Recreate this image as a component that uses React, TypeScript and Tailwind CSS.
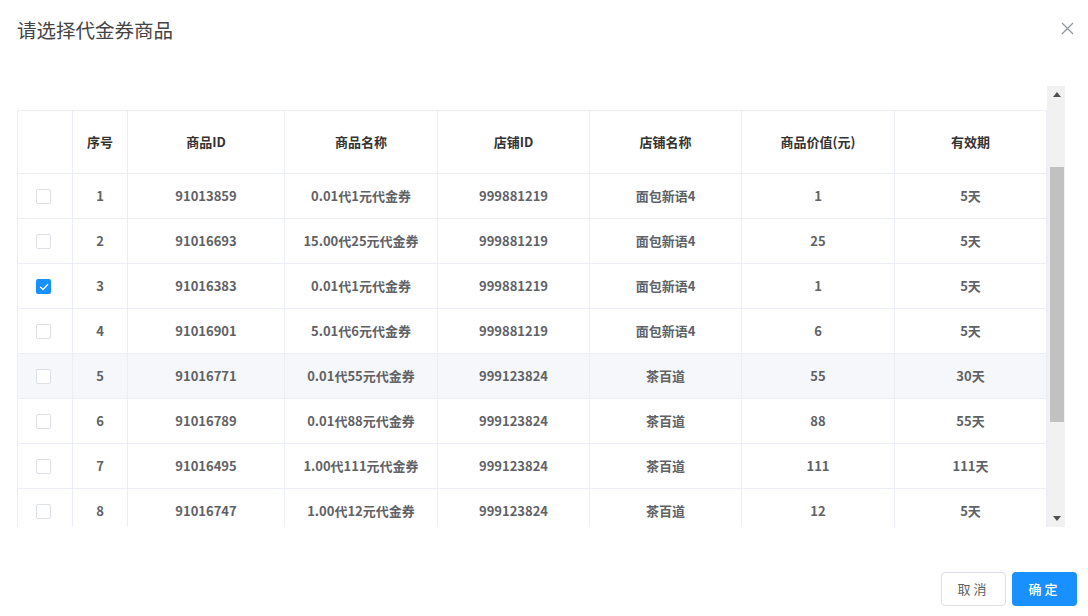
import React from "react";

const rows = [
  { n: 1, id: "91013859", name: "0.01代1元代金券", sid: "999881219", shop: "面包新语4", v: "1", d: "5天" },
  { n: 2, id: "91016693", name: "15.00代25元代金券", sid: "999881219", shop: "面包新语4", v: "25", d: "5天" },
  { n: 3, id: "91016383", name: "0.01代1元代金券", sid: "999881219", shop: "面包新语4", v: "1", d: "5天", checked: true },
  { n: 4, id: "91016901", name: "5.01代6元代金券", sid: "999881219", shop: "面包新语4", v: "6", d: "5天" },
  { n: 5, id: "91016771", name: "0.01代55元代金券", sid: "999123824", shop: "茶百道", v: "55", d: "30天", hover: true },
  { n: 6, id: "91016789", name: "0.01代88元代金券", sid: "999123824", shop: "茶百道", v: "88", d: "55天" },
  { n: 7, id: "91016495", name: "1.00代111元代金券", sid: "999123824", shop: "茶百道", v: "111", d: "111天" },
  { n: 8, id: "91016747", name: "1.00代12元代金券", sid: "999123824", shop: "茶百道", v: "12", d: "5天" },
];

const widths = [55, 55, 157, 153, 152, 152, 153, 152];
const headers = ["", "序号", "商品ID", "商品名称", "店铺ID", "店铺名称", "商品价值(元)", "有效期"];

function Checkbox({ checked }: { checked?: boolean }) {
  return checked ? (
    <span className="flex w-[15px] h-[15px] rounded-[2px] bg-[#1890ff] items-center justify-center">
      <svg width="10" height="8" viewBox="0 0 10 8" fill="none">
        <path d="M1.5 4.2 L4 6.5 L8.7 1.5" stroke="white" strokeWidth="1.2" strokeLinecap="round" strokeLinejoin="round" />
      </svg>
    </span>
  ) : (
    <span className="block w-[15px] h-[15px] rounded-[2px] border border-[#dcdfe6] bg-white" />
  );
}

export default function App() {
  return (
    <div
      className="w-[1088px] h-[616px] bg-white flex flex-col overflow-hidden"
      style={{ fontFamily: '"Noto Sans CJK SC", "Noto Sans", sans-serif' }}
    >
      <div className="flex items-start justify-between h-[86px] pl-[17px] pr-[14px] pt-[17px]">
        <div className="text-[19.5px] leading-[26px] text-[#444] font-normal">请选择代金券商品</div>
        <svg className="mt-[5px]" width="13" height="13" viewBox="0 0 13 13" fill="none">
          <path d="M1 1 L12 12 M12 1 L1 12" stroke="#909399" strokeWidth="1.1" />
        </svg>
      </div>

      <div className="flex h-[441px] pl-[17px]">
        <div className="w-[1030px] h-full overflow-hidden pt-[24px]">
          <table className="table-fixed border-collapse w-[1029px]">
            <colgroup>
              {widths.map((w, i) => (
                <col key={i} style={{ width: w }} />
              ))}
            </colgroup>
            <thead>
              <tr className="h-[63px]">
                {headers.map((h, i) => (
                  <th
                    key={i}
                    className="border border-[#ebeef5] text-[13px] font-semibold text-[#333] text-center p-0"
                  >
                    {h}
                  </th>
                ))}
              </tr>
            </thead>
            <tbody>
              {rows.map((r) => (
                <tr key={r.n} className={"h-[45px] " + (r.hover ? "bg-[#f5f7fa]" : "bg-white")}>
                  <td className="border border-[#ebeef5] p-0">
                    <div className="flex items-center justify-center pr-[3px] pt-[1px]">
                      <Checkbox checked={r.checked} />
                    </div>
                  </td>
                  {[String(r.n), r.id, r.name, r.sid, r.shop, r.v, r.d].map((c, i) => (
                    <td
                      key={i}
                      className="border border-[#ebeef5] text-center p-0 text-[13px] font-bold text-[#606266]"
                    >
                      {c}
                    </td>
                  ))}
                </tr>
              ))}
            </tbody>
          </table>
        </div>
        <div className="w-[18px] h-full bg-[#f1f1f1] flex flex-col">
          <div className="h-[17px] flex items-center justify-center pl-[2px]">
            <svg width="8" height="5" viewBox="0 0 8 5">
              <path d="M0 5 L4 0 L8 5 Z" fill="#505050" />
            </svg>
          </div>
          <div className="h-[64px]" />
          <div className="ml-[3px] w-[14px] h-[255px] bg-[#c1c1c1]" />
          <div className="flex-1" />
          <div className="h-[17px] flex items-center justify-center pl-[2px]">
            <svg width="8" height="5" viewBox="0 0 8 5">
              <path d="M0 0 L8 0 L4 5 Z" fill="#505050" />
            </svg>
          </div>
        </div>
      </div>

      <div className="flex-1 flex items-start justify-end pr-[11px] pt-[45px] gap-[6px]">
        <button className="w-[65px] h-[34px] border border-[#dcdfe6] rounded-[4px] bg-white text-[13px] text-[#606266] tracking-[3px]">
          取消
        </button>
        <button className="w-[65px] h-[34px] rounded-[4px] bg-[#1890ff] text-[13px] text-white font-medium tracking-[3px]">
          确定
        </button>
      </div>
    </div>
  );
}
